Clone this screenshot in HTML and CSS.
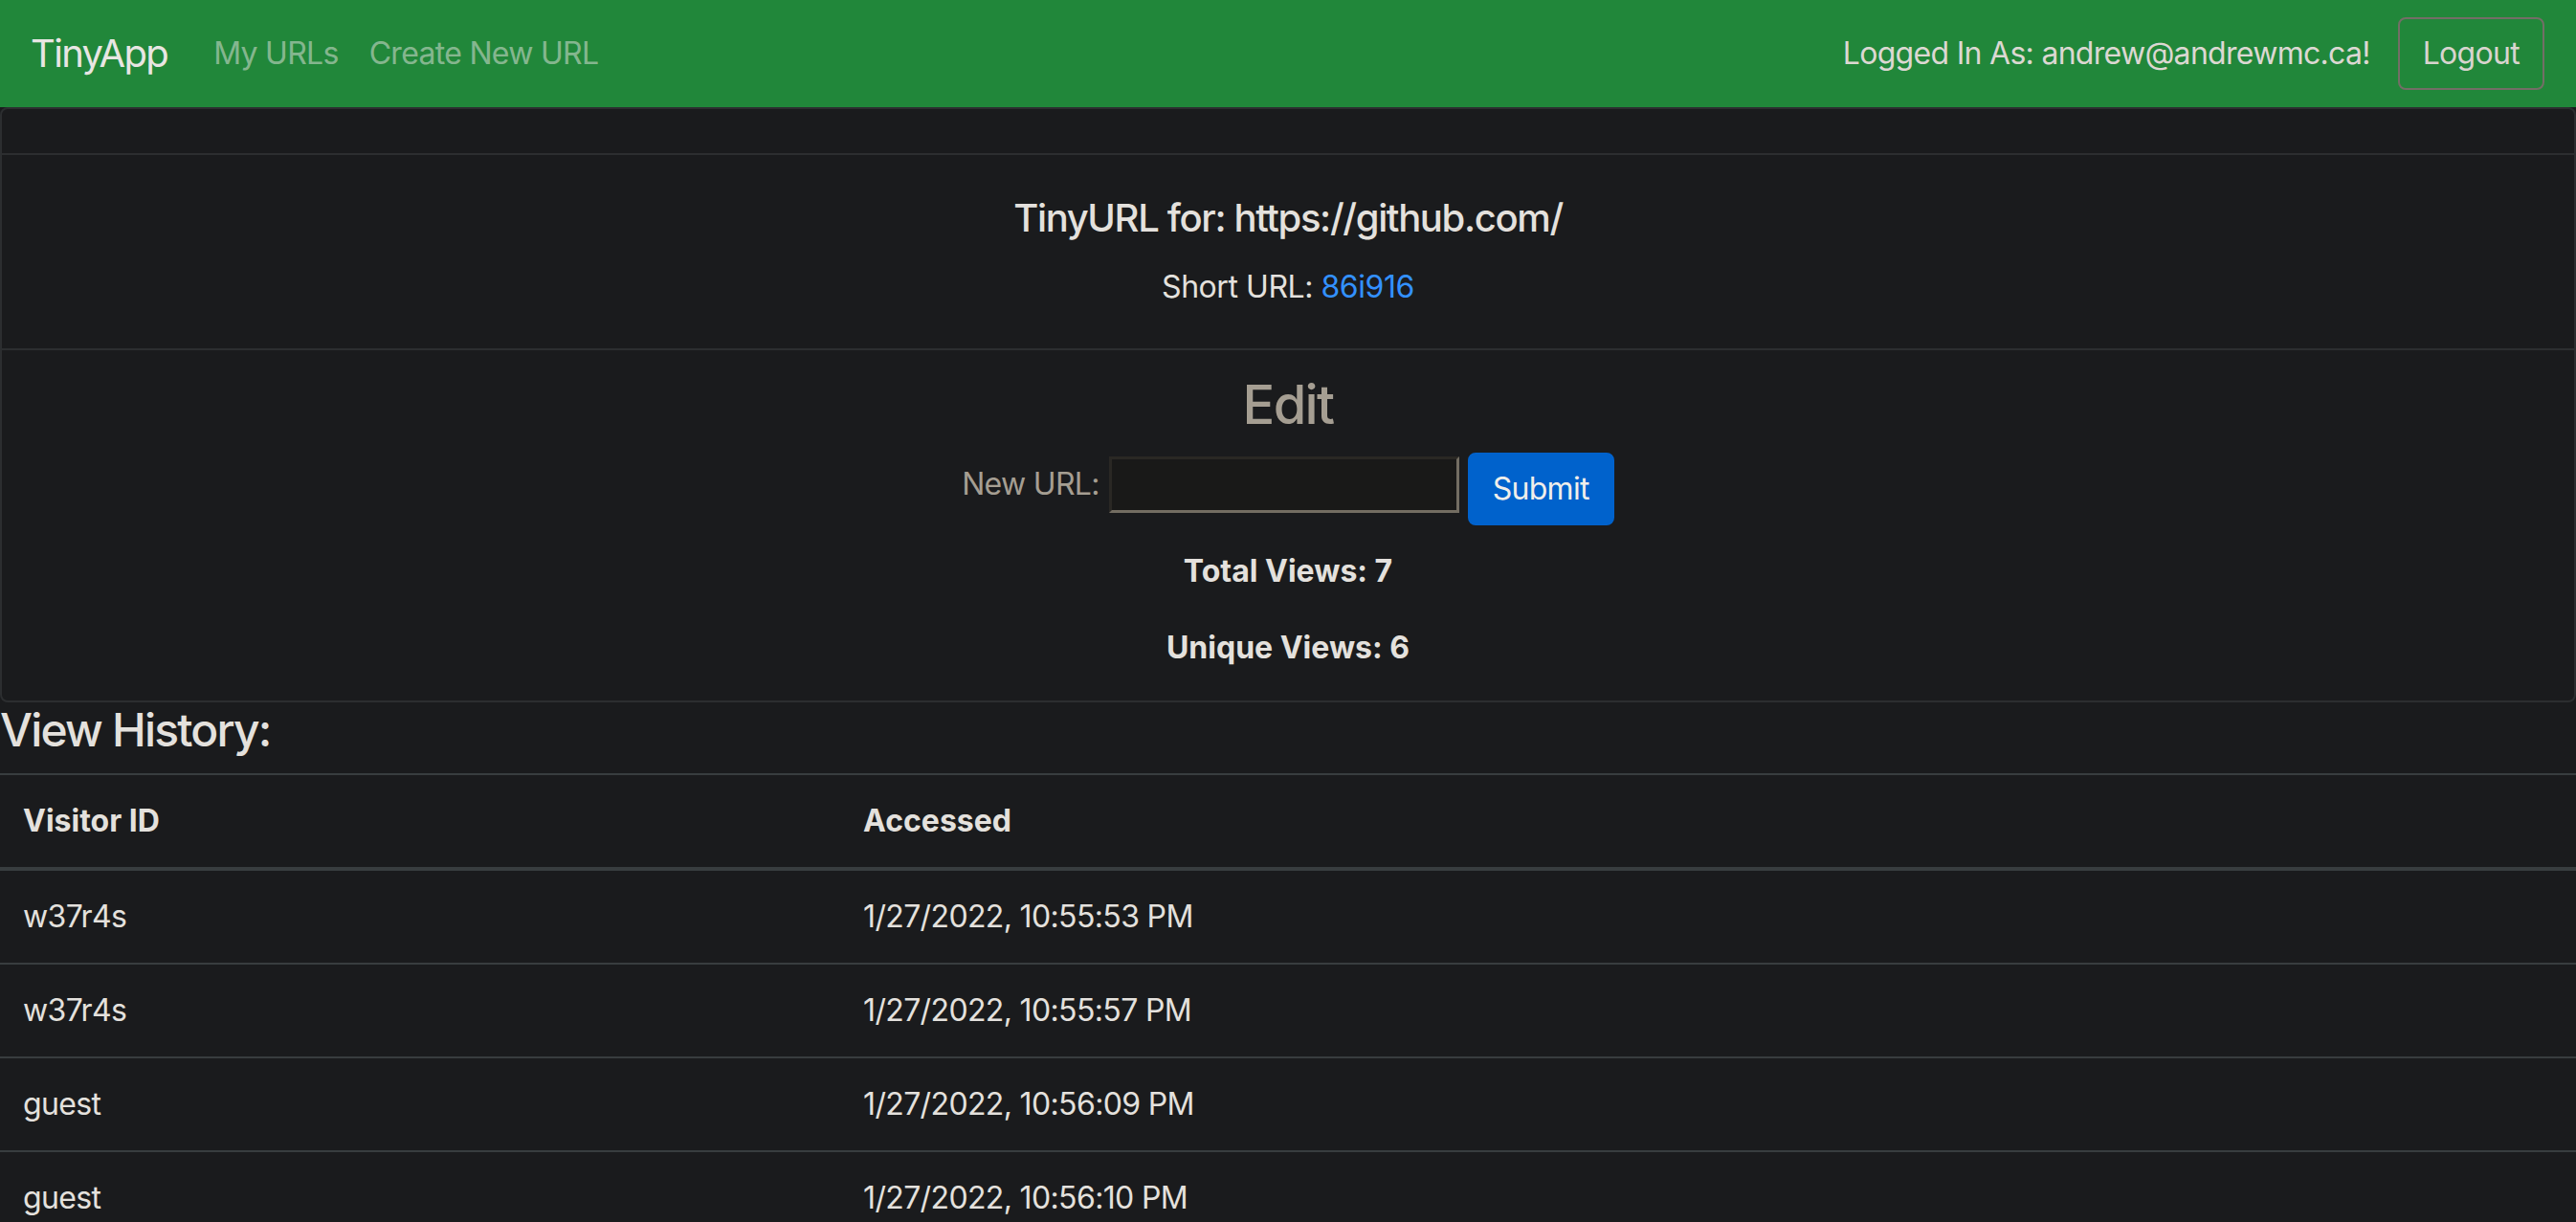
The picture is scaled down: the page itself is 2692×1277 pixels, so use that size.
FILE: index.html
```html
<!DOCTYPE html>
<html lang="en">
<head>
<meta charset="utf-8">
<title>TinyApp</title>
<link rel="stylesheet" href="styles.css">
</head>
<body>
<nav class="navbar">
  <a class="brand" href="#">TinyApp</a>
  <ul class="nav">
    <li><a class="nav-link" href="#">My URLs</a></li>
    <li><a class="nav-link" href="#">Create New URL</a></li>
  </ul>
  <div class="nav-right">
    <span class="user">Logged In As: andrew@andrewmc.ca!</span>
    <button class="btn btn-outline" type="button">Logout</button>
  </div>
</nav>
<main>
  <div class="card">
    <div class="card-header"></div>
    <div class="card-body">
      <h5 class="card-title">TinyURL for: https://github.com/</h5>
      <p class="card-text">Short URL: <a class="link" href="#">86i916</a></p>
    </div>
    <div class="card-footer">
      <h3 class="edit-title">Edit</h3>
      <form class="edit-form">
        <label class="edit-label" for="newurl">New URL:</label>
        <input class="edit-input" id="newurl" type="text">
        <button class="btn btn-primary" type="button">Submit</button>
      </form>
      <p class="stat">Total Views: 7</p>
      <p class="stat stat-last">Unique Views: 6</p>
    </div>
  </div>
  <h4 class="history-title">View History:</h4>
  <table class="table">
    <thead>
      <tr><th class="col-visitor">Visitor ID</th><th>Accessed</th></tr>
    </thead>
    <tbody>
      <tr><td>w37r4s</td><td>1/27/2022, 10:55:53 PM</td></tr>
      <tr><td>w37r4s</td><td>1/27/2022, 10:55:57 PM</td></tr>
      <tr><td>guest</td><td>1/27/2022, 10:56:09 PM</td></tr>
      <tr><td>guest</td><td>1/27/2022, 10:56:10 PM</td></tr>
    </tbody>
  </table>
</main>
</body>
</html>
```

FILE: styles.css
```css
* { box-sizing: border-box; }
html, body {
  margin: 0;
  padding: 0;
  background: #1a1b1d;
}
body {
  font-family: Inter, "Noto Sans", "Liberation Sans", sans-serif;
  font-size: 32px;
  line-height: 1.5;
  letter-spacing: -0.022em;
  color: #e4e1dd;
}
a { text-decoration: none; }

.navbar {
  display: flex;
  align-items: center;
  height: 112px;
  padding: 16px 33px 16px 32px;
  background: #21873a;
}
.brand {
  font-size: 40px;
  line-height: 60px;
  letter-spacing: -0.042em;
  padding: 10px 0;
  margin-right: 32px;
  color: #e8e6e3;
}
.nav {
  display: flex;
  list-style: none;
  margin: 0;
  padding: 0;
}
.nav-link {
  display: block;
  padding: 16px 16px;
  line-height: 48px;
  color: rgba(232, 230, 227, 0.52);
}
.nav-right {
  margin-left: auto;
  display: flex;
  align-items: center;
}
.user {
  color: #dcd8d2;
  margin-right: 29px;
}
.btn {
  font-family: inherit;
  font-size: 32px;
  line-height: 48px;
  letter-spacing: -0.022em;
  padding: 12px 24px;
  border-radius: 8px;
  border: 2px solid transparent;
  cursor: pointer;
}
.btn-outline {
  background: transparent;
  border-color: #736e66;
  color: #d8d4ce;
}
.btn-primary {
  background: #0062cc;
  border-color: #0062cc;
  color: #f0eeeb;
}

.card {
  border: 2px solid #2c2e30;
  border-radius: 8px;
  background: #1a1b1d;
}
.card-header {
  height: 48px;
  border-bottom: 2px solid #2c2e30;
}
.card-body {
  text-align: center;
  padding: 42px 40px 40px;
}
.card-title {
  margin: 0 0 24px;
  font-size: 40px;
  font-weight: 500;
  line-height: 48px;
  letter-spacing: -0.034em;
}
.card-text { margin: 0; letter-spacing: -0.014em; }
.link { color: #3391ff; }

.card-footer {
  text-align: center;
  border-top: 2px solid #2c2e30;
  padding: 24px 40px 0;
}
.edit-title {
  margin: 0 0 16px;
  font-size: 56px;
  font-weight: 500;
  line-height: 67px;
  letter-spacing: -0.03em;
  color: #a59e92;
}
.edit-form {
  display: flex;
  justify-content: center;
  align-items: flex-start;
  margin: 0 0 24px;
}
.edit-label {
  color: #a59e92;
  margin-top: 9px;
  margin-right: 10px;
}
.edit-input {
  width: 366px;
  height: 59px;
  margin-top: 4px;
  margin-right: 9px;
  background: #191918;
  border-style: solid;
  border-width: 3px;
  border-color: #2a2824 #736d62 #736d62 #2a2824;
  font-family: inherit;
  font-size: 32px;
  color: #e8e6e3;
  padding: 2px 4px;
}
.stat {
  margin: 0 0 32px;
  font-weight: 700;
  letter-spacing: 0;
}
.stat-last { margin-bottom: 31px; }

.history-title {
  margin: 0 0 16px;
  font-size: 48px;
  font-weight: 500;
  line-height: 58px;
  letter-spacing: -0.038em;
}

.table {
  width: 100%;
  border-collapse: collapse;
}
.table th, .table td {
  text-align: left;
  padding: 24px;
  line-height: 48px;
  border-top: 2px solid #383d3f;
  vertical-align: top;
}
.table td { letter-spacing: -0.02em; }
.table th {
  font-weight: 700;
  letter-spacing: 0;
  border-bottom: 4px solid #383d3f;
}
.col-visitor { width: 878px; }
```
